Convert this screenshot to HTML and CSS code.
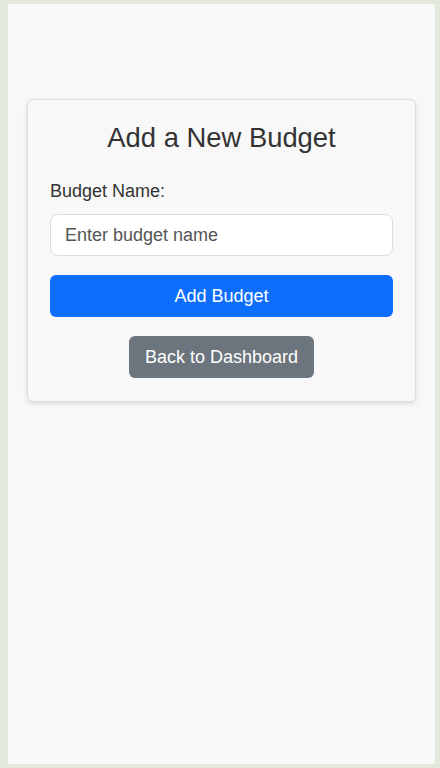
FILE: index.html
```html
<!DOCTYPE html>
<html lang="en">
<head>
<meta charset="utf-8">
<title>Add a New Budget</title>
<link rel="stylesheet" href="styles.css">
</head>
<body>
<div class="page">
  <div class="card">
    <h2 class="title">Add a New Budget</h2>
    <form class="form">
      <label class="label" for="name">Budget Name:</label>
      <input class="input" id="name" type="text" placeholder="Enter budget name">
      <button class="btn btn-primary" type="button">Add Budget</button>
    </form>
    <div class="back-row">
      <button class="btn btn-secondary" type="button">Back to Dashboard</button>
    </div>
  </div>
</div>
</body>
</html>
```
FILE: styles.css
```css
html, body {
  margin: 0;
  padding: 0;
}
body {
  background: #e4e9dd;
  font-family: "Liberation Sans", Arial, sans-serif;
  color: #333;
  padding: 4px 5px 4px 8px;
}
.page {
  background: #f8f8f8;
  height: 760px;
  box-sizing: border-box;
  padding: 95px 19px 0 19px;
}
.card {
  background: #f8f8f8;
  border: 1px solid #dcdcdc;
  border-radius: 6px;
  box-shadow: 0 2px 5px rgba(0, 0, 0, 0.12);
  padding: 22px 22px 23px;
}
.title {
  margin: 0 0 27px;
  font-size: 27.4px;
  font-weight: normal;
  text-align: center;
  line-height: 32px;
}
.form {
  display: flex;
  flex-direction: column;
}
.label {
  font-size: 18px;
  line-height: 21px;
  margin-bottom: 12px;
}
.input {
  height: 42px;
  box-sizing: border-box;
  border: 1px solid #dddddd;
  border-radius: 8px;
  background: #fff;
  padding: 0 14px;
  font-family: inherit;
  font-size: 18px;
  color: #333;
  margin-bottom: 19px;
}
.input::placeholder {
  color: #555;
}
.btn {
  height: 42px;
  border: none;
  border-radius: 6px;
  color: #fff;
  font-family: inherit;
  font-size: 18px;
  padding: 0 16px;
}
.btn-primary {
  background: #0d6efd;
}
.back-row {
  display: flex;
  justify-content: center;
  margin-top: 19px;
}
.btn-secondary {
  background: #6c757d;
}
```
